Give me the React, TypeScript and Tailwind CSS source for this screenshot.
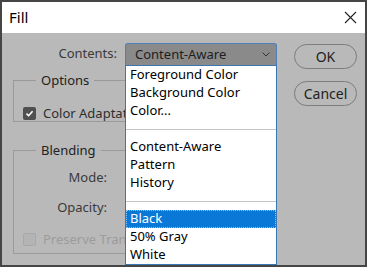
import React from 'react'

const items: (string | null)[] = [
  'Foreground Color',
  'Background Color',
  'Color...',
  null,
  'Content-Aware',
  'Pattern',
  'History',
  null,
  'Black',
  '50% Gray',
  'White',
]

function Check({ on, disabled }: { on?: boolean; disabled?: boolean }) {
  if (on) {
    return (
      <span className="w-[13px] h-[13px] shrink-0 rounded-[2px] bg-[#505050] flex items-center justify-center">
        <svg width="9" height="9" viewBox="0 0 9 9">
          <path d="M1.5 4.6 L3.6 6.7 L7.6 2.2" stroke="#fff" strokeWidth="1.6" fill="none" />
        </svg>
      </span>
    )
  }
  return (
    <span
      className={
        'w-[13px] h-[13px] shrink-0 rounded-[2px] border ' +
        (disabled ? 'border-[#a8a8a8] bg-[#b4b4b4]' : 'border-[#6a6a6a]')
      }
    />
  )
}

export default function App() {
  return (
    <div
      className="w-[367px] h-[267px] bg-[#454545] p-[2px] flex flex-col text-[13px] text-[#2e2e2e]"
      style={{ fontFamily: '"Noto Sans", "Open Sans", sans-serif' }}
    >
      {/* title bar */}
      <div className="h-[31px] bg-white flex items-center justify-between pl-[7px] pr-[8px]">
        <span className="text-[15px] text-black">Fill</span>
        <svg width="13" height="13" viewBox="0 0 13 13">
          <path d="M1 1 L12 12 M12 1 L1 12" stroke="#222" strokeWidth="1.1" />
        </svg>
      </div>

      {/* body */}
      <div className="flex-1 bg-[#b9b9b9] relative flex">
        <div className="w-[285px] flex flex-col">
          <div className="flex items-center mt-[10px] h-[22px]">
            <span className="w-[115px] text-right text-[#3a3a3a]">Contents:</span>
            <div className="ml-[8px] w-[152px] h-[22px] bg-[#8a8a8a] border border-b-0 border-[#4b80b8] rounded-t-[3px] flex items-center justify-between pl-[9px] pr-[6px] text-[#1e1e1e]">
              <span>Content-Aware</span>
              <svg width="8" height="5" viewBox="0 0 8 5">
                <path d="M0.5 0.5 L4 4 L7.5 0.5" stroke="#333" strokeWidth="1" fill="none" />
              </svg>
            </div>
          </div>

          <fieldset className="ml-[11px] mt-[6px] w-[260px] h-[51px] border border-[#9a9a9a] px-[9px]">
            <legend className="ml-[13px] px-[5px] text-[#222]">Options</legend>
            <div className="flex items-center gap-[7px] mt-[13px]">
              <Check on />
              <span className="whitespace-nowrap">Color Adaptation</span>
            </div>
          </fieldset>

          <fieldset className="ml-[11px] mt-[19px] w-[260px] h-[113px] border border-[#9a9a9a] px-[9px]">
            <legend className="ml-[13px] px-[5px] text-[#222]">Blending</legend>
            <div className="flex flex-col">
              <span className="w-[84px] text-right mt-[7px] text-[#3a3a3a]">Mode:</span>
              <span className="w-[84px] text-right mt-[11px] text-[#3a3a3a]">Opacity:</span>
              <div className="flex items-center gap-[7px] mt-[12px]">
                <Check disabled />
                <span className="whitespace-nowrap text-[#9c9c9c]">Preserve Transparency</span>
              </div>
            </div>
          </fieldset>
        </div>

        <div className="flex flex-col gap-[12px] mt-[11px] ml-[7px]">
          <button className="w-[63px] h-[25px] rounded-full border border-[#7c7c7c] text-[14px] text-[#222]">
            OK
          </button>
          <button className="w-[63px] h-[25px] rounded-full border border-[#7c7c7c] text-[14px] text-[#222]">
            Cancel
          </button>
        </div>

        {/* open dropdown list */}
        <div className="absolute left-[123px] top-[32px] w-[152px] h-[200px] bg-white border border-[#3a75b6] flex flex-col text-black">
          {items.map((it, i) =>
            it === null ? (
              <div key={i} className="h-[18px] flex items-center">
                <div className="w-full h-px bg-[#c4c4c4]" />
              </div>
            ) : (
              <div
                key={i}
                className={
                  'h-[18px] flex items-center pl-[4px] ' +
                  (it === 'Black' ? 'bg-[#0a78d6] text-white outline-1 outline-dotted outline-[#9cc3ea] -outline-offset-1' : '')
                }
              >
                {it}
              </div>
            )
          )}
        </div>
      </div>
    </div>
  )
}
